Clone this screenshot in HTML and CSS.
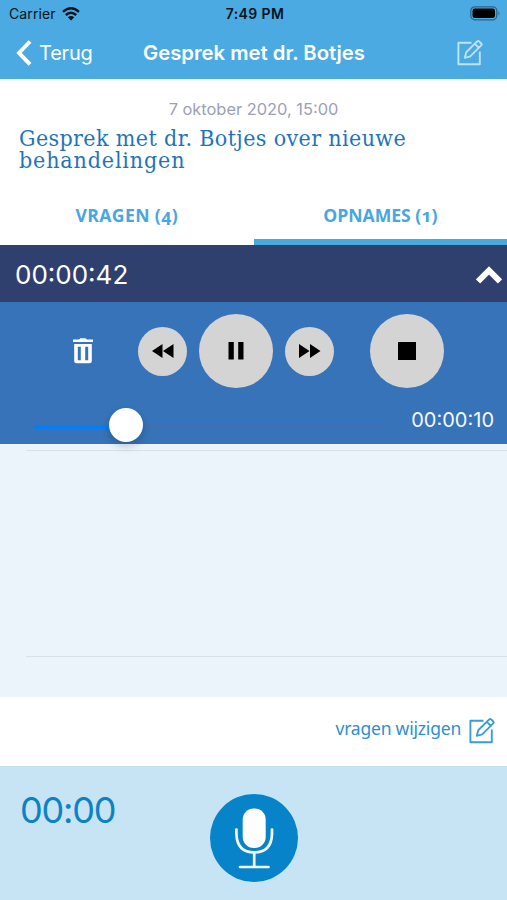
FILE: index.html
```html
<!DOCTYPE html>
<html lang="nl">
<head>
<meta charset="utf-8">
<meta name="viewport" content="width=device-width, initial-scale=1">
<title>Gesprek met dr. Botjes</title>
<link rel="stylesheet" href="styles.css">
</head>
<body>
<svg class="defs" width="0" height="0">
  <symbol id="edit" viewBox="0 0 26 26">
    <path d="M14.5 2.8H1.4V24.2H22.8V11.5M7.8 17.8L9.2 12.2L20.2 1.4Q21.2.6 22.1 1.4L24.2 3.5Q25.1 4.4 24.2 5.4L13.2 16.3ZM17.8 3.8L21.8 7.8"/>
  </symbol>
</svg>
<header class="top">
  <div class="status">
    <div class="carrier"><span>Carrier</span>
      <svg width="18" height="14" viewBox="0 0 18 14"><path d="M1 4.8Q9-2.2 17 4.8M3.8 8Q9 3.4 14.2 8" fill="none" stroke="#06131b" stroke-width="2.4"/><path d="M5.8 10.3Q9 7.6 12.2 10.3L9 13.6Z" fill="#06131b"/></svg>
    </div>
    <span class="clock">7:49 PM</span>
    <svg class="battery" width="31" height="15" viewBox="0 0 31 15"><rect x=".8" y=".8" width="26" height="13" rx="4" fill="none" stroke="#2c6688" stroke-width="1.3"/><rect x="2.5" y="2.5" width="22.5" height="9.6" rx="2.3"/><path d="M28.5 5Q30.5 7.3 28.5 9.6Z" fill="#2c6688"/></svg>
  </div>
  <nav class="navbar">
    <a class="back"><svg width="17" height="27" viewBox="0 0 17 27"><path d="M15 1.5L4 12.9L15 24.3" fill="none" stroke="#fff" stroke-width="3.9"/></svg><span>Terug</span></a>
    <h1>Gesprek met dr. Botjes</h1>
    <svg class="edit edit-top" width="26" height="26"><use href="#edit"/></svg>
  </nav>
</header>
<section class="intro">
  <p class="date">7 oktober 2020, 15:00</p>
  <h2><span class="line1">Gesprek met dr. Botjes over nieuwe</span><br><span class="line2">behandelingen</span></h2>
</section>
<div class="tabs">
  <div class="tab"><span class="vragen">VRAGEN (<i class="four">4</i>)</span></div>
  <div class="tab active"><span class="opnames">OPNAMES (<i class="one">1</i>)</span></div>
</div>
<div class="record">
  <span class="total">00:00:42</span>
  <svg width="26" height="18" viewBox="0 0 26 18"><path d="M2 15.5L13 4.5L24 15.5" fill="none" stroke="#fff" stroke-width="6"/></svg>
</div>
<section class="player">
  <div class="controls">
    <svg class="trash" width="20" height="26" viewBox="0 0 20 26"><path fill="#fff" fill-rule="evenodd" d="M0 1.5H6L7.5.3H12.5L14 1.5H20V4H0ZM1.2 6H18.8V22.8Q18.8 25.3 16.3 25.3H3.7Q1.2 25.3 1.2 22.8ZM4.8 8.8V22.3H7.8V8.8ZM12.2 8.8V22.3H15.2V8.8Z"/></svg>
    <div class="btn small rewind"><svg width="22" height="14" viewBox="0 0 22 14"><path d="M10.5 0V14L0 7ZM21.5 0V14L11 7Z"/></svg></div>
    <div class="btn pause"><svg width="16" height="18" viewBox="0 0 16 18"><path d="M.5 0H5.8V17.5H.5ZM10.2 0H15.5V17.5H10.2Z"/></svg></div>
    <div class="btn small forward"><svg width="22" height="14" viewBox="0 0 22 14"><path d="M0 0V14L10.5 7ZM11 0V14L21.5 7Z"/></svg></div>
    <div class="btn stop"><svg width="18" height="18"><rect width="18" height="18"/></svg></div>
  </div>
  <div class="progress">
    <div class="track"><div class="fill"></div><div class="thumb"></div></div>
    <span class="elapsed">00:00:10</span>
  </div>
</section>
<div class="list"><div class="row"></div></div>
<div class="change"><span>vragen wijzigen</span><svg class="edit edit-blue" width="26" height="26"><use href="#edit"/></svg></div>
<footer class="recorder">
  <span class="timer">00:00</span>
  <div class="mic"><svg width="88" height="88" viewBox="0 0 88 88"><rect x="32.7" y="14.5" width="23" height="39.5" rx="11" fill="#fff"/><path d="M26.4 35.5V40Q27 58.4 44.2 58.4T62 40V35.5M44.2 58.4V72.5M30 73H58.5" fill="none" stroke="#f4fbff" stroke-width="2.7" stroke-linecap="round"/></svg></div>
</footer>
</body>
</html>
```
FILE: styles.css
```css
* { box-sizing: border-box; }
body { margin: 0; width: 507px; height: 900px; overflow: hidden; background: #fff; font-family: Inter, sans-serif; }
.defs { display: block; height: 0; }
svg { display: block; flex: none; }
span { white-space: nowrap; }
h1, h2, p { margin: 0; }
.top { height: 79px; background: #4baae1; }
.status { display: grid; grid-template-columns: 1fr auto 1fr; height: 27px; padding: 0 6px 0 9px; align-items: center; color: #06131b; }
.carrier { display: flex; gap: 6px; align-items: center; font-size: 14px; letter-spacing: .1px; }
.clock { font-size: 14px; font-weight: 600; letter-spacing: .4px; }
.battery { justify-self: end; }
.navbar { display: grid; grid-template-columns: 143px 1fr 26px; height: 52px; padding-right: 24px; align-items: center; color: #fff; }
.back { display: flex; gap: 7px; align-items: center; padding-left: 15px; font-size: 20px; letter-spacing: -.2px; }
h1 { margin-top: -2px; font-size: 20.3px; font-weight: 600; white-space: nowrap; }
.edit { fill: none; stroke-width: 1.9; stroke-linejoin: round; }
.edit-top { stroke: #c0e2f6; margin-top: -1px; }
.edit-blue { stroke: #3a9dd5; margin-top: -1px; }
.intro { height: 107px; padding: 20px 19px 0; }
.date { font-size: 16.4px; line-height: 20px; color: #9c9fb8; text-align: center; }
h2 { margin-top: 8px; color: #1f75b8; font: 400 23px/22px "DejaVu Serif Condensed", "DejaVu Serif", serif; }
.line1 { letter-spacing: .37px; }
.line2 { letter-spacing: .85px; }
.tabs { display: grid; grid-template-columns: 1fr 1fr; height: 59px; }
.tab { display: flex; align-items: center; justify-content: center; border-bottom: 6px solid #fff; padding-top: 4px; color: #48a7df; font: 700 17.6px/22px "Open Sans", sans-serif; }
.tab i { display: inline-block; font-style: normal; line-height: 1; }
.vragen { letter-spacing: .4px; }
.four { transform: translateY(3px); }
.one { transform: scaleY(.78); transform-origin: 50% 85%; }
.active { border-color: #48a9dd; }
.record { display: flex; justify-content: space-between; align-items: center; height: 57px; padding: 2px 5px 0 15px; background: #30406e; color: #fff; }
.total { font-size: 26px; }
.player { height: 142px; background: #3673b8; padding-top: 12px; }
.controls { display: flex; align-items: center; height: 74px; padding-left: 73px; }
.btn { display: flex; align-items: center; justify-content: center; width: 74px; height: 74px; border-radius: 50%; background: #d4d4d4; }
.small { width: 49px; height: 49px; }
.rewind { margin-left: 45px; }
.pause, .forward { margin-left: 12px; }
.stop { margin-left: 36px; }
.progress { display: flex; align-items: flex-start; justify-content: space-between; margin-top: 20px; padding: 0 13px 0 34px; }
.track { position: relative; width: 349px; height: 2px; margin-top: 17px; background: #426fae; }
.fill { width: 92px; height: 4px; border-radius: 2px; background: #087cf5; }
.thumb { position: absolute; left: 75px; top: -17px; width: 34px; height: 34px; border-radius: 50%; background: #fff; box-shadow: 0 4px 8px #0003; z-index: 1; }
.elapsed { color: #f5faff; font-size: 20px; line-height: 25px; }
.list { height: 253px; padding-top: 6px; background: #ebf4fb; }
.row { height: 207px; margin-left: 26px; border: solid #d8e2e6; border-width: 1px 0; }
.change { display: flex; justify-content: flex-end; align-items: center; gap: 8px; height: 69px; padding: 0 12px 0 0; color: #308fcb; font: 17.5px/24px "Noto Sans", sans-serif; letter-spacing: -.2px; }
.change span { margin-top: -8px; }
.recorder { display: grid; grid-template-columns: 210px 88px; height: 134px; padding-top: 28px; background: #c7e4f5; }
.timer { padding-left: 20px; color: #0c82c5; font-size: 36px; font-weight: 400; line-height: 32px; letter-spacing: -1.2px; }
.mic { width: 88px; height: 88px; border-radius: 50%; background: #0783c9; }
```
